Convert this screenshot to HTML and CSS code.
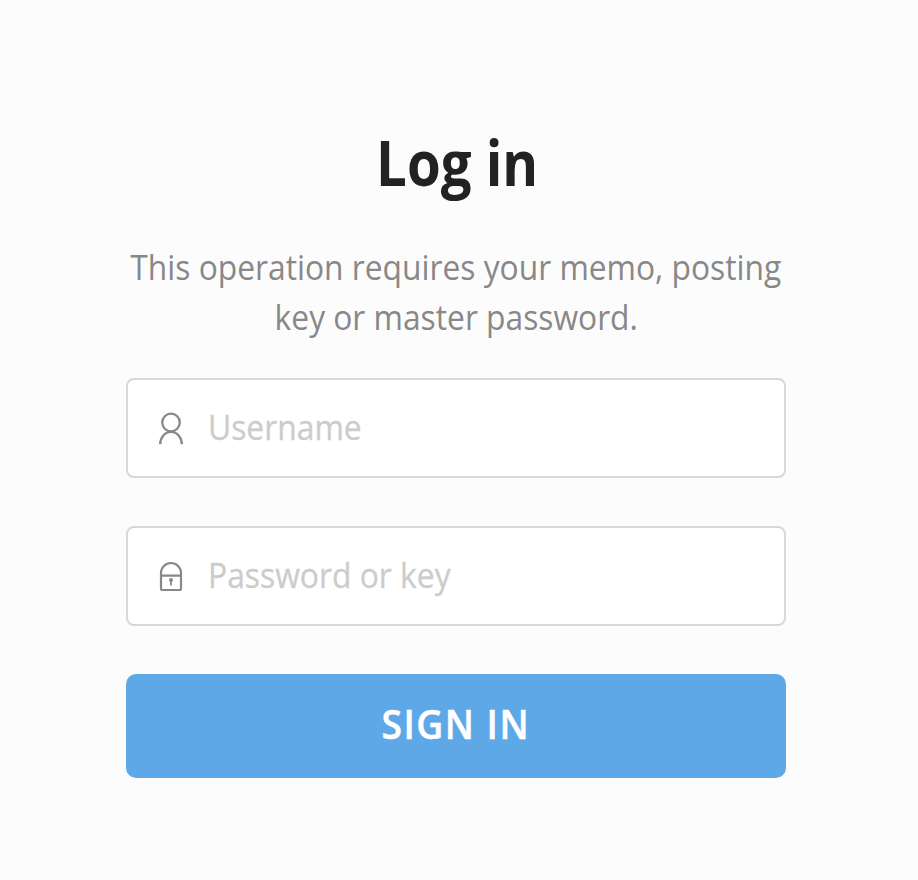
FILE: index.html
```html
<!DOCTYPE html>
<html lang="en">
<head>
<meta charset="utf-8">
<title>Log in</title>
<link rel="stylesheet" href="styles.css">
</head>
<body>
<main class="login">
  <h1 class="title"><span class="title-text">Log in</span></h1>
  <p class="description"><span class="line">This operation requires your memo, posting</span><span class="line">key or master password.</span></p>
  <form class="form">
    <label class="field">
      <svg class="icon" viewBox="0 0 26 34" aria-hidden="true"><circle cx="13" cy="11.500" r="8.800"/><path d="M2.200 33.200A10.800 12.400 0 0 1 23.800 33.200"/></svg>
      <span class="placeholder">Username</span>
    </label>
    <label class="field">
      <svg class="icon lock" viewBox="0 0 26 34" aria-hidden="true"><path d="M3 14a10 10 0 0 1 20 0v15.500q0 1.500-1.500 1.500h-17q-1.500 0-1.500-1.500zM3 16.700h20"/><path class="stem" d="M13 21v5.500"/><circle class="keyhole" cx="13" cy="21" r="2"/></svg>
      <span class="placeholder">Password or key</span>
    </label>
    <button class="submit" type="button"><span class="submit-text">SIGN IN</span></button>
  </form>
</main>
</body>
</html>
```
FILE: styles.css
```css
* { box-sizing: border-box; }
body { margin: 0; background: #fcfcfc; font-family: "Open Sans", sans-serif; }
.login { width: 660px; margin-left: 126px; padding-top: 122px; text-align: center; }
.title { margin: 0; height: 80px; line-height: 80px; font-size: 62px; font-weight: 700; color: #222; }
.title-text { display: inline-block; transform: translateX(1px) scaleX(.88); }
.description { margin: 40px 0 0; display: flex; flex-direction: column; align-items: center; font-size: 35px; line-height: 50px; color: #888; }
.line { white-space: nowrap; transform: scaleX(.907); }
.form { margin-top: 36px; display: flex; flex-direction: column; gap: 48px; }
.field { height: 100px; border: 2px solid #d8d8d8; border-radius: 8px; background: #fff; display: flex; align-items: center; padding-left: 30px; }
.icon { width: 26px; height: 34px; fill: none; stroke: #888; stroke-width: 2.3; flex: none; }
.lock { stroke-width: 2.2; }
.stem { stroke-width: 1.8; }
.keyhole { fill: #888; stroke: none; }
.placeholder { margin-left: 24px; font-size: 35px; line-height: 48px; margin-top: -2px; color: #ccc; -webkit-text-stroke: .3px #ccc; white-space: nowrap; transform: scaleX(.909); transform-origin: left; }
.submit { height: 104px; border: 0; border-radius: 10px; background: #5fa8e8; color: #fff; padding: 0 0 6px; font: 600 40px "Open Sans", sans-serif; }
.submit-text { display: inline-block; letter-spacing: 1.6px; margin-right: -1.6px; -webkit-text-stroke: .5px #fff; transform: translateX(-1px) scaleX(.93); }
```
